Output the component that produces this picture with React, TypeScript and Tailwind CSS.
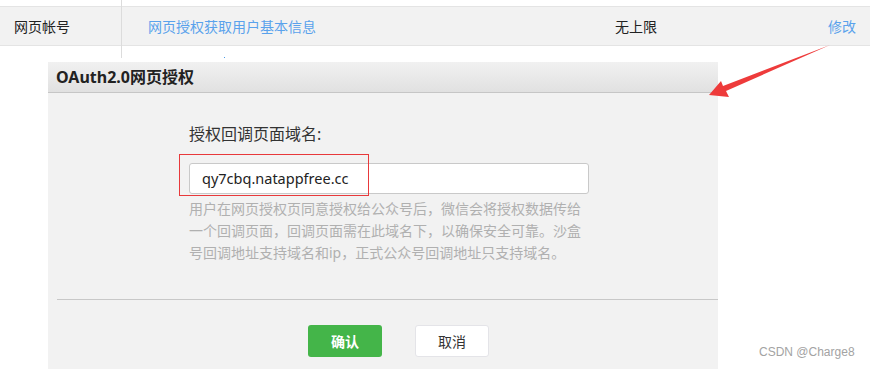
import React from "react";

export default function App() {
  const font = { fontFamily: '"Noto Sans", "Noto Sans CJK SC", sans-serif' };
  return (
    <div className="relative w-[870px] h-[369px] overflow-hidden bg-white text-[#333]" style={font}>
      {/* table row */}
      <div className="flex h-[58px]">
        <div className="w-[122px] border-r border-[#dcdcdc] pt-[6px]">
          <div className="h-[40px] border-y border-[#e4e4e4] bg-[#f2f2f2] flex items-center pl-[14px] text-[14px] text-[#222]">
            网页帐号
          </div>
        </div>
        <div className="flex-1 pt-[6px]">
          <div className="h-[40px] border-y border-[#e4e4e4] bg-[#f2f2f2] flex items-center pl-[26px] text-[14px]">
            <span className="w-[467px] text-[#5aa2ec]">网页授权获取用户基本信息</span>
            <span className="w-[213px] text-[#222]">无上限</span>
            <span className="text-[#5aa2ec]">修改</span>
          </div>
        </div>
      </div>

      {/* dialog */}
      <div className="ml-[48px] mt-[4px] w-[670px] h-[307px] bg-[#f2f2f2]">
        <div className="h-[31px] border-b border-[#c6c6c6] bg-gradient-to-b from-[#f1f1f1] to-[#e1e1e1] flex items-center pl-[8px] text-[16px] font-bold text-[#222]">
          OAuth2.0网页授权
        </div>
        <div className="pl-[141px] pt-[29px]">
          <div className="text-[16px] leading-[24px] text-[#333]">授权回调页面域名:</div>
          <div className="mt-[17px] w-[400px] h-[31px] rounded-[3px] border border-[#c9c9c9] bg-white flex items-center pl-[12px] text-[14.5px] text-[#222]">
            qy7cbq.natappfree.cc
          </div>
          <div className="mt-[4px] w-[402px] text-[14px] leading-[22px] text-[#b0b0b0]">
            用户在网页授权页同意授权给公众号后，微信会将授权数据传给一个回调页面，回调页面需在此域名下，以确保安全可靠。沙盒号回调地址支持域名和ip，正式公众号回调地址只支持域名。
          </div>
        </div>
        <div className="ml-[9px] mt-[35px] h-[1px] bg-[#c8c8c8]" />
        <div className="flex pl-[260px] mt-[25px] gap-[33px]">
          <div className="w-[74px] h-[32px] rounded-[3px] bg-[#44b549] text-white text-[14px] font-bold flex items-center justify-center">
            确认
          </div>
          <div className="w-[74px] h-[32px] rounded-[3px] bg-white border border-[#e4e4e8] text-[#333] text-[14px] flex items-center justify-center">
            取消
          </div>
        </div>
      </div>

      {/* annotations */}
      <div className="absolute left-[179px] top-[154px] w-[190px] h-[42px] border border-[#e8393b]" />
      <svg className="absolute left-0 top-0" width="870" height="369" viewBox="0 0 870 369">
        <polygon points="709,95 721,81 723,86 830,45 726,91 729,97" fill="#ee3b3b" />
      </svg>
      <div className="absolute left-[224px] top-[57px] w-[1px] h-[1px] bg-[#4a9ce8]" />
      <div className="absolute left-[759px] top-[344px] text-[12px] leading-[16px] text-[#a3a3a3]" style={{ fontFamily: '"Liberation Sans", Arial, sans-serif' }}>
        CSDN @Charge8
      </div>
    </div>
  );
}
